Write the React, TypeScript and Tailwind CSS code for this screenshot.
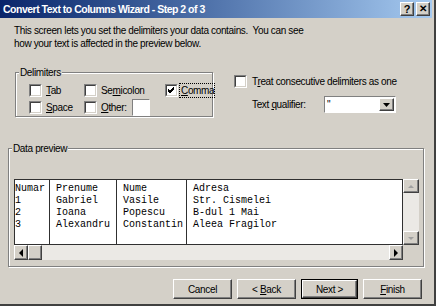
import React from "react";

const font = { fontFamily: '"Liberation Sans", Arial, sans-serif' };

function Check({ checked = false }: { checked?: boolean }) {
  return (
    <span className="relative inline-block w-[13px] h-[13px] bg-white border-t border-l border-t-[#808080] border-l-[#808080] border-b border-r border-b-white border-r-white shrink-0">
      <span className="absolute inset-0 border-t border-l border-t-[#404040] border-l-[#404040] border-b border-r border-b-[#d4d0c8] border-r-[#d4d0c8]" />
      {checked && (
        <svg className="absolute left-[1px] top-[1px]" width="9" height="9" viewBox="0 0 9 9">
          <path d="M1 4 L3 6 L7 2 M1 5 L3 7 L7 3 M1 3 L3 5 L7 1" stroke="#000" strokeWidth="1" fill="none" />
        </svg>
      )}
    </span>
  );
}

function Raised({ className = "", children }: { className?: string; children?: React.ReactNode }) {
  return (
    <div className={"relative bg-[#d4d0c8] border border-t-white border-l-white border-b-[#404040] border-r-[#404040] " + className}>
      <div className="absolute inset-0 border-b border-r border-b-[#808080] border-r-[#808080] pointer-events-none" />
      {children}
    </div>
  );
}

function Btn({ label, u, def = false }: { label: string; u: number; def?: boolean }) {
  const content =
    u >= 0 ? (
      <span>
        {label.slice(0, u)}
        <span className="underline">{label.slice(u, u + 1)}</span>
        {label.slice(u + 1)}
      </span>
    ) : (
      <span>{label}</span>
    );
  const inner = (
    <Raised className="w-full h-full flex items-center justify-center text-black">{content}</Raised>
  );
  return def ? (
    <div className="w-[57px] h-[20px] border border-black">{inner}</div>
  ) : (
    <div className="w-[59px] h-[20px]">{inner}</div>
  );
}

function Arrow({ dir }: { dir: "up" | "down" | "left" | "right" }) {
  const d =
    dir === "up"
      ? "M1 4 L4 1 L7 4 Z"
      : dir === "down"
      ? "M1 1 L4 4 L7 1 Z"
      : dir === "left"
      ? "M4 0 L0 4 L4 8 Z"
      : "M0 0 L4 4 L0 8 Z";
  const grey = dir === "up" || dir === "down";
  const w = grey ? 8 : 5;
  const h = grey ? 5 : 8;
  return (
    <svg width={w} height={h} viewBox={`0 0 ${w} ${h}`}>
      <path d={d} fill={grey ? "#a0a0a0" : "#000"} />
    </svg>
  );
}

const rows = [
  ["Numar", "Prenume", "Nume", "Adresa"],
  ["1", "Gabriel", "Vasile", "Str. Cismelei"],
  ["2", "Ioana", "Popescu", "B-dul 1 Mai"],
  ["3", "Alexandru", "Constantin", "Aleea Fragilor"],
];

export default function App() {
  return (
    <div className="w-[436px] h-[306px] bg-[#d4d0c8] relative overflow-hidden" style={font}>
      <div className="w-[436px] h-[306px] flex flex-col border-r-2 border-b-2 border-r-[#404040] border-b-[#404040] text-[10px] tracking-[-0.35px] leading-[13px] text-black">
        {/* title bar */}
        <div className="h-[18px] mr-[2px] flex items-center justify-between bg-gradient-to-r from-[#0a246a] to-[#a6caf0] pl-[3px] pr-[2px]">
          <span className="text-white font-bold text-[10.5px] tracking-[-0.5px] leading-none">
            Convert Text to Columns Wizard - Step 2 of 3
          </span>
          <div className="flex gap-[2px]">
            <Raised className="w-[14px] h-[14px] flex items-center justify-center text-[11px] font-bold leading-none text-black">?</Raised>
            <Raised className="w-[14px] h-[14px] flex items-center justify-center text-[10px] font-bold leading-none text-black">✕</Raised>
          </div>
        </div>

        {/* description */}
        <div className="pl-[14px] pt-[6px]">
          <div className="whitespace-pre">This screen lets you set the delimiters your data contains.  You can see</div>
          <div>how your text is affected in the preview below.</div>
        </div>

        {/* delimiters row */}
        <div className="flex mt-[22px]">
          <div className="relative ml-[15px] w-[198px] h-[45px] border border-[#808080] shadow-[inset_1px_1px_0_#fff,1px_1px_0_#fff]">
            <span className="absolute left-[3px] top-[-7px] bg-[#d4d0c8] px-[1px]">Delimiters</span>
            <div className="grid grid-cols-[55px_81px_auto] pl-[13px] pt-[11px] gap-y-[4px]">
              <label className="flex items-center gap-[4px]"><Check /><span><span className="underline">T</span>ab</span></label>
              <label className="flex items-center gap-[4px]"><Check /><span>Se<span className="underline">m</span>icolon</span></label>
              <label className="flex items-center gap-[2px]"><Check checked /><span className="outline outline-1 outline-dotted outline-black pl-[1px]"><span className="underline">C</span>omma</span></label>
              <label className="flex items-center gap-[4px]"><Check /><span><span className="underline">S</span>pace</span></label>
              <label className="flex items-center gap-[4px]"><Check /><span><span className="underline">O</span>ther:</span>
                <span className="ml-[1px] -my-[2px] inline-block w-[18px] h-[17px] bg-white border border-t-[#808080] border-l-[#808080] border-b-white border-r-white" />
              </label>
            </div>
          </div>
          <div className="ml-[21px] pt-[3px]">
            <label className="flex items-center gap-[5px]"><Check /><span>T<span className="underline">r</span>eat consecutive delimiters as one</span></label>
            <div className="flex items-center mt-[8px] ml-[18px]">
              <span className="w-[72px]">Text <span className="underline">q</span>ualifier:</span>
              <div className="w-[72px] h-[17px] bg-white border border-t-[#808080] border-l-[#808080] border-b-white border-r-white flex items-center justify-between">
                <span className="pl-[2px] leading-none">"</span>
                <Raised className="w-[15px] h-[13px] mr-[1px] flex items-center justify-center">
                  <svg width="7" height="4" viewBox="0 0 7 4"><path d="M0 0 L7 0 L3.5 4 Z" fill="#000" /></svg>
                </Raised>
              </div>
            </div>
          </div>
        </div>

        {/* data preview */}
        <div className="relative ml-[8px] mt-[31px] w-[416px] h-[119px] border border-[#808080] shadow-[inset_1px_1px_0_#fff,1px_1px_0_#fff]">
          <span className="absolute left-[3px] top-[-7px] bg-[#d4d0c8] px-[1px]">Data preview</span>
          <div className="ml-[5px] mt-[30px] w-[406px] flex flex-col">
            <div className="flex">
              <div className="w-[389px] h-[66px] bg-white border border-[#303030] flex text-[10px] leading-[12px] tracking-[0px]" style={{ fontFamily: '"Liberation Mono", "Courier New", monospace' }}>
                {[35, 67, 70, 215].map((w, ci) => (
                  <div
                    key={ci}
                    className={"h-full pt-[3px] " + (ci < 3 ? "border-r border-[#303030] " : "") + (ci === 0 ? "pl-[0px]" : "pl-[6px]")}
                    style={{ width: w }}
                  >
                    {rows.map((r, ri) => (
                      <div key={ri} className="whitespace-pre">{r[ci]}</div>
                    ))}
                  </div>
                ))}
              </div>
              <div className="w-[16px] h-[66px] bg-[#ebe9e5] flex flex-col justify-between">
                <Raised className="w-[16px] h-[14px] flex items-center justify-center"><Arrow dir="up" /></Raised>
                <Raised className="w-[16px] h-[14px] flex items-center justify-center"><Arrow dir="down" /></Raised>
              </div>
            </div>
            <div className="flex h-[15px]">
              <div className="w-[389px] h-[15px] bg-[#ebe9e5] flex justify-between">
                <div className="flex">
                  <Raised className="w-[14px] h-[15px] flex items-center justify-center"><Arrow dir="left" /></Raised>
                  <Raised className="w-[14px] h-[15px]" />
                </div>
                <Raised className="w-[14px] h-[15px] flex items-center justify-center"><Arrow dir="right" /></Raised>
              </div>
            </div>
          </div>
        </div>

        {/* buttons */}
        <div className="flex justify-end gap-[5px] mr-[12px] mt-[12px]">
          <Btn label="Cancel" u={-1} />
          <Btn label="< Back" u={2} />
          <Btn label="Next >" u={-1} def />
          <Btn label="Finish" u={0} />
        </div>
      </div>
    </div>
  );
}
